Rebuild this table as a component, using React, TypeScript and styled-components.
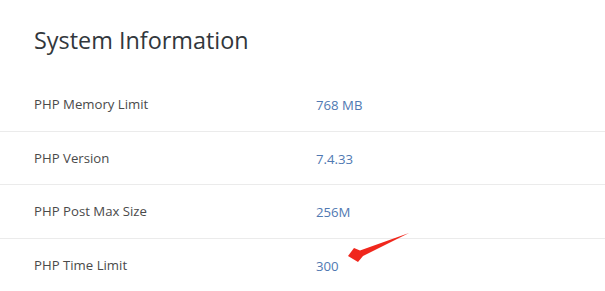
import React from 'react'
import styled, { createGlobalStyle } from 'styled-components'

const GlobalStyle = createGlobalStyle`
    html, body {
        margin: 0;
        padding: 0;
        background: #fff;
    }

    body {
        font-family: 'Open Sans', 'Noto Sans', sans-serif;
    }
`

const Panel = styled.section`
    width: 605px;
    height: 291px;
    overflow: hidden;
    background: #fff;
`

const Title = styled.h2`
    margin: 0;
    padding: 24px 34px 0;
    height: 78px;
    box-sizing: border-box;
    font-size: 23.4px;
    font-weight: 400;
    line-height: 33px;
    color: #32373c;
`

const Table = styled.div`
    display: flex;
    flex-direction: column;
`

const Row = styled.div`
    display: grid;
    grid-template-columns: 282px 1fr;
    align-items: center;
    height: 53.5px;
    padding: 0 34px;
    border-bottom: 1px solid #ebebeb;
    box-sizing: border-box;

    &:last-child {
        border-bottom: none;
    }
`

const Label = styled.span`
    font-size: 13.2px;
    color: #4a4a4a;
`

const Value = styled.span`
    position: relative;
    font-size: 13.2px;
    color: #5079b2;
`

const Pointer = styled.svg`
    position: absolute;
    left: 30px;
    top: -26px;
    width: 66px;
    height: 34px;
    overflow: visible;
`

const RedArrow = () => (
    <Pointer viewBox="0 0 66 34">
        <path d="M2 25 L8 17 L14 19.5 L63 2 L17 25 L12 31 Z" fill="#f0271d" />
    </Pointer>
)

const settings = [
    { label: 'PHP Memory Limit', value: '768 MB' },
    { label: 'PHP Version', value: '7.4.33' },
    { label: 'PHP Post Max Size', value: '256M' },
    { label: 'PHP Time Limit', value: '300', marked: true },
]

const App = () => (
    <>
        <GlobalStyle />
        <Panel>
            <Title>System Information</Title>
            <Table>
                {settings.map(item => (
                    <Row key={item.label}>
                        <Label>{item.label}</Label>
                        <div>
                            <Value>
                                {item.value}
                                {item.marked && <RedArrow />}
                            </Value>
                        </div>
                    </Row>
                ))}
            </Table>
        </Panel>
    </>
)

export default App
